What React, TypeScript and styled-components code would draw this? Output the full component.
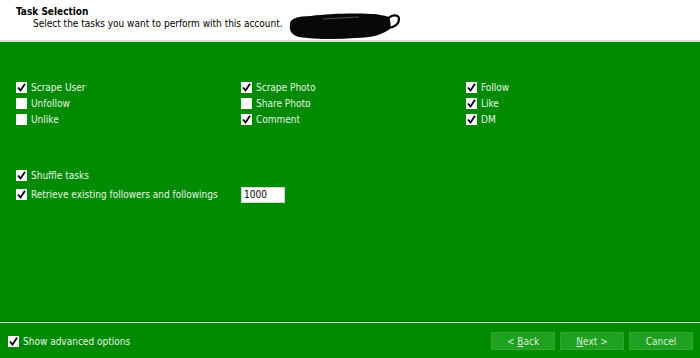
import React, { useState } from "react";
import styled, { createGlobalStyle } from "styled-components";

const GlobalStyle = createGlobalStyle`
  html, body {
    margin: 0;
    padding: 0;
    background: #008a00;
  }
  body {
    font-family: "DejaVu Sans Condensed", "DejaVu Sans", Verdana, sans-serif;
    font-size: 10px;
  }
`;

const Wizard = styled.div`
  width: 700px;
  height: 358px;
  display: flex;
  flex-direction: column;
  background: #008a00;
  overflow: hidden;
`;

const Header = styled.div`
  height: 42px;
  box-sizing: border-box;
  background: #ffffff;
  border-bottom: 2px solid #d3e0cf;
  padding: 6px 0 0 16px;
  color: #000;
`;

const Title = styled.div`
  font-weight: bold;
  font-size: 10px;
  line-height: 12px;
`;

const Subtitle = styled.div`
  display: flex;
  align-items: flex-start;
  padding-left: 17px;
  font-size: 10px;
  line-height: 12px;
  height: 12px;
`;

const Redacted = styled.svg`
  margin-left: 4px;
  margin-top: -8px;
  flex: none;
`;

const Body = styled.div`
  flex: 1;
  padding: 39px 0 0 16px;
  display: flex;
  flex-direction: column;
`;

const TaskGrid = styled.div`
  display: grid;
  grid-template-columns: 225px 225px 200px;
  row-gap: 3px;
`;

const Options = styled.div`
  margin-top: 43px;
  display: flex;
  flex-direction: column;
  gap: 6px;
`;

const Row = styled.label`
  display: flex;
  align-items: center;
  height: 13px;
  color: #e6f5e6;
  font-size: 10px;
  cursor: default;
`;

const Box = styled.span<{ $on: boolean }>`
  width: 11px;
  height: 11px;
  background: #ffffff;
  margin-right: 4px;
  display: inline-flex;
  align-items: center;
  justify-content: center;
  flex: none;
`;

const Text = styled.span<{ $w?: number }>`
  width: ${(p) => (p.$w ? `${p.$w}px` : "auto")};
  white-space: nowrap;
`;

const NumberBox = styled.input`
  width: 44px;
  height: 16px;
  box-sizing: border-box;
  border: 1px solid #cfd8cf;
  font-family: "DejaVu Sans Condensed", "DejaVu Sans", sans-serif;
  font-size: 10px;
  padding: 1px 2px;
  color: #000;
  outline: none;
`;

const Footer = styled.div`
  height: 34px;
  border-top: 1px solid #056a05;
  box-shadow: inset 0 1px 0 #bfe0bf, inset 0 2px 0 #0c8c0c;
  display: flex;
  align-items: center;
  justify-content: space-between;
  padding: 2px 7px 0 8px;
`;

const Buttons = styled.div`
  display: flex;
  gap: 5px;
`;

const Button = styled.button`
  width: 64px;
  height: 18px;
  background: #20a020;
  border: 1px solid #2cab2c;
  color: #d8efd8;
  font-family: "DejaVu Sans Condensed", "DejaVu Sans", sans-serif;
  font-size: 10px;
  padding: 0;
  & u {
    text-decoration: underline;
  }
`;

function Check({ on }: { on: boolean }) {
  return (
    <Box $on={on}>
      {on && (
        <svg width="9" height="9" viewBox="0 0 9 9">
          <path d="M1 4.5 L3.5 7.5 L8 0.8" stroke="#000" strokeWidth="1.8" fill="none" />
        </svg>
      )}
    </Box>
  );
}

function Option({ label, checked, width }: { label: string; checked: boolean; width?: number }) {
  const [on, setOn] = useState(checked);
  return (
    <Row onClick={() => setOn(!on)}>
      <Check on={on} />
      <Text $w={width}>{label}</Text>
    </Row>
  );
}

const tasks = [
  ["Scrape User", true],
  ["Scrape Photo", true],
  ["Follow", true],
  ["Unfollow", false],
  ["Share Photo", false],
  ["Like", true],
  ["Unlike", false],
  ["Comment", true],
  ["DM", true],
] as const;

export default function App() {
  return (
    <Wizard>
      <GlobalStyle />
      <Header>
        <Title>Task Selection</Title>
        <Subtitle>
          Select the tasks you want to perform with this account.
          <Redacted width="114" height="30" viewBox="0 0 114 30">
            <path
              d="M3 15 C2 9 10 6 24 6 C40 4 62 3 84 4 C92 4 98 6 102 7 C104 12 104 16 103 19 C96 24 86 28 68 28 C48 30 26 29 12 27 C5 25 2 21 3 15 Z"
              fill="#080808"
            />
            <path d="M100 10 C104 4 112 4 112 9 C112 14 108 17 101 18" stroke="#000" strokeWidth="2.2" fill="none" />
            <path d="M36 9 L72 7" stroke="#666" strokeWidth="0.8" />
          </Redacted>
        </Subtitle>
      </Header>
      <Body>
        <TaskGrid>
          {tasks.map(([label, on]) => (
            <Option key={label} label={label} checked={on} />
          ))}
        </TaskGrid>
        <Options>
          <Option label="Shuffle tasks" checked />
          <Row>
            <Check on />
            <Text $w={210}>Retrieve existing followers and followings</Text>
            <NumberBox defaultValue="1000" />
          </Row>
        </Options>
      </Body>
      <Footer>
        <Option label="Show advanced options" checked />
        <Buttons>
          <Button>
            &lt; <u>B</u>ack
          </Button>
          <Button>
            <u>N</u>ext &gt;
          </Button>
          <Button>Cancel</Button>
        </Buttons>
      </Footer>
    </Wizard>
  );
}
